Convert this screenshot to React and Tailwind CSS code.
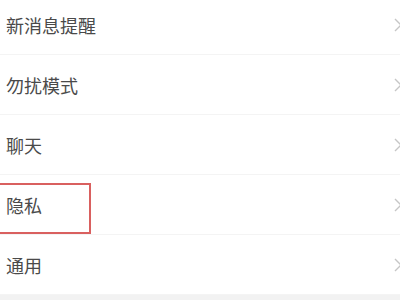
import React from "react";

const items = ["新消息提醒", "勿扰模式", "聊天", "隐私", "通用"];

function Chevron() {
  return (
    <svg width="10" height="16" viewBox="0 0 10 16" className="shrink-0">
      <path d="M2 2 L8 8 L2 14" fill="none" stroke="#c6c6c6" strokeWidth="1.4" />
    </svg>
  );
}

export default function App() {
  return (
    <div
      className="relative w-[400px] h-[300px] overflow-hidden bg-[#f2f2f2]"
      style={{ fontFamily: '"Noto Sans CJK SC", "Noto Sans", sans-serif' }}
    >
      <div className="-mt-[5px] bg-white">
        {items.map((t) => (
          <div
            key={t}
            className="h-[60px] flex items-center justify-between pl-[6px] -mr-[3px] border-b border-[#f4f4f4]"
          >
            <span className="text-[18px] leading-none text-[#4a4a4a]">{t}</span>
            <Chevron />
          </div>
        ))}
      </div>
      <div className="absolute left-[-4px] top-[183px] w-[95px] h-[51px] border-2 border-[#d9605f]" />
    </div>
  );
}
